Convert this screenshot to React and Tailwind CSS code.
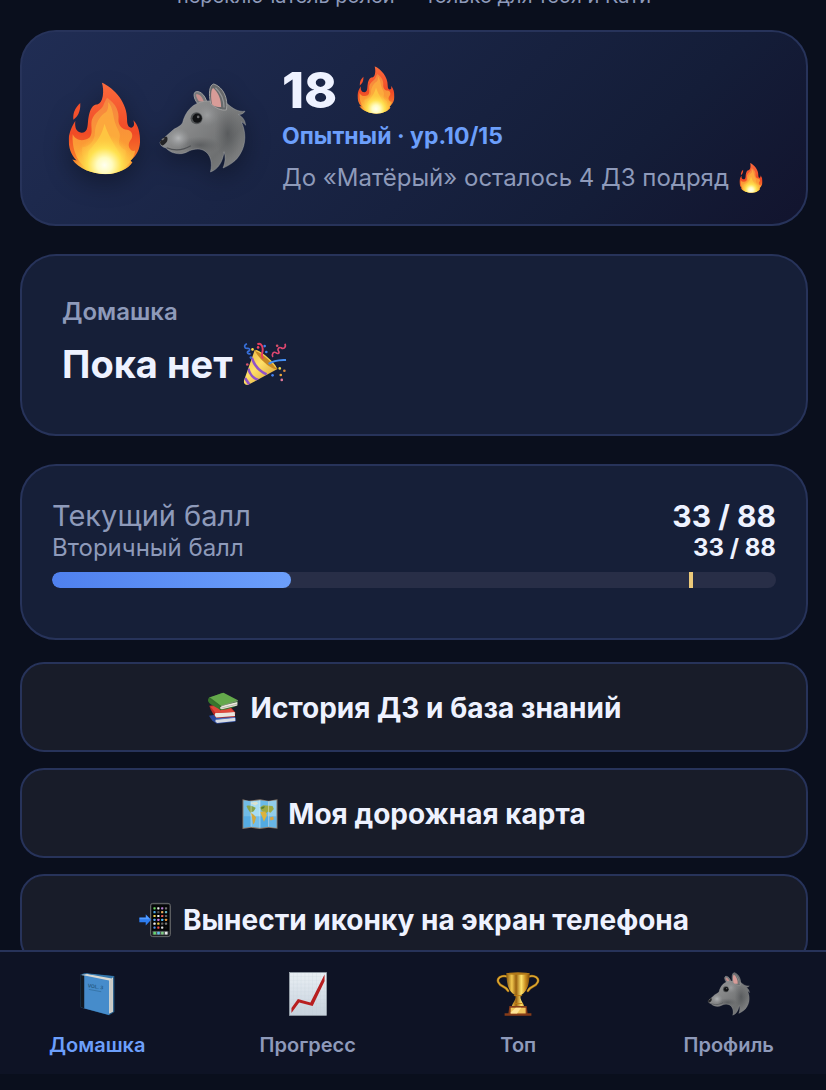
import React, { useId, useState } from 'react';

const Flame = ({ className }) => {
  const id = useId();
  return (
    <svg viewBox="84 65 220 279" className={className} aria-hidden="true">
      <defs>
        <linearGradient id={`${id}-outer`} x1="0" y1="0" x2="0" y2="1">
          <stop offset="0" stopColor="#fb6b3c" />
          <stop offset="0.55" stopColor="#f04a26" />
          <stop offset="0.85" stopColor="#f9822b" />
          <stop offset="1" stopColor="#fdb53a" />
        </linearGradient>
        <linearGradient id={`${id}-mid`} x1="0" y1="0" x2="0" y2="1">
          <stop offset="0" stopColor="#f58440" />
          <stop offset="0.6" stopColor="#fb9a35" />
          <stop offset="1" stopColor="#fdc63f" />
        </linearGradient>
        <radialGradient id={`${id}-glow`} gradientUnits="userSpaceOnUse" cx="194" cy="315" r="92">
          <stop offset="0" stopColor="#fffff0" />
          <stop offset="0.25" stopColor="#fffcc0" />
          <stop offset="0.55" stopColor="#ffe352" stopOpacity="0.95" />
          <stop offset="1" stopColor="#fec33e" stopOpacity="0" />
        </radialGradient>
        <clipPath id={`${id}-clip`}>
          <path d="M186 66C225 84 263 128 262 178C262 192 266 202 275 202C285 200 284 190 281 180C296 195 302 220 301 245C300 267 292 283 278 296L272 302L278 306C268 325 232 342 196 342C158 342 115 325 97 298L110 301C92 284 86 262 86 235C88 215 97 195 106 182C104 200 108 216 125 217C147 218 142 190 146 170C150 145 160 130 172 132C190 128 194 92 186 66Z" />
        </clipPath>
      </defs>
      <path d="M121 128C108 140 98 155 100 178C115 168 122 152 121 128Z" fill="#f4512c" />
      <g clipPath={`url(#${id}-clip)`}>
        <path d="M84 64H304V344H84Z" fill={`url(#${id}-outer)`} />
        <path
          d="M202 112C229 131 239 154 236 178C235 193 246 207 262 208C279 211 282 229 272 240C259 257 274 277 286 271C285 303 246 342 196 342C137 342 94 296 98 222C105 236 120 244 137 238C166 230 150 199 156 178C165 154 184 150 190 136C194 126 198 118 202 112Z"
          fill={`url(#${id}-mid)`}
        />
        <path
          d="M205 125C221 143 219 168 226 187C232 207 245 218 239 237C234 253 244 265 258 269C263 303 230 341 194 341C153 341 122 302 127 261C148 260 164 242 165 218C166 190 180 166 199 155C205 148 206 137 205 125Z"
          fill="#fdb53f"
          opacity="0.65"
        />
        <path
          d="M194 190C187 222 171 245 147 271C136 303 163 341 194 341C230 341 251 302 240 280C221 249 204 223 194 190Z"
          fill="#ffd744"
          opacity="0.6"
        />
        <circle cx="194" cy="315" r="92" fill={`url(#${id}-glow)`} />
      </g>
    </svg>
  );
};

const Wolf = ({ className }) => {
  const id = useId();
  return (
    <svg viewBox="355 62 265 273" className={className} aria-hidden="true">
      <defs>
        <linearGradient id={`${id}-fur`} x1="0" y1="0" x2="1" y2="1">
          <stop offset="0" stopColor="#a4a4a4" />
          <stop offset="0.45" stopColor="#848586" />
          <stop offset="0.72" stopColor="#6e7071" />
          <stop offset="1" stopColor="#8a8b8c" />
        </linearGradient>
        <radialGradient id={`${id}-cheek`}>
          <stop offset="0" stopColor="#b2b4b6" />
          <stop offset="1" stopColor="#999b9d" stopOpacity="0" />
        </radialGradient>
        <radialGradient id={`${id}-shade`}>
          <stop offset="0" stopColor="#44474a" stopOpacity="0.55" />
          <stop offset="1" stopColor="#55575a" stopOpacity="0" />
        </radialGradient>
        <clipPath id={`${id}-clip`}>
          <path d="M358 241C368 229 384 217 399 203C410 196 420 194 426 183C434 150 456 122 493 118C516 114 535 121 560 125C576 139 593 151 614 148C609 156 602 158 594 158C609 166 614 177 616 190C610 184 606 181 603 180C617 210 618 246 600 276C588 298 568 310 548 319C555 302 556 285 551 270C547 300 533 323 510 331C517 303 511 278 490 266C475 259 457 261 441 270C419 282 390 275 376 259C364 256 358 250 358 241Z" />
        </clipPath>
      </defs>
      <path d="M472 125C459 111 457 91 467 89C482 87 495 103 499 121Z" fill="#77797b" stroke="#a0a0a0" strokeWidth="3" />
      <path d="M475 118C468 108 464 97 469 96C480 98 487 109 490 120Z" fill="#c68f8d" />
      <g clipPath={`url(#${id}-clip)`}>
        <path d="M355 62H620V335H355Z" fill={`url(#${id}-fur)`} />
        <ellipse cx="562" cy="215" rx="40" ry="80" fill={`url(#${id}-shade)`} />
        <ellipse cx="478" cy="250" rx="62" ry="26" fill={`url(#${id}-shade)`} />
        <ellipse cx="413" cy="229" rx="34" ry="30" fill={`url(#${id}-cheek)`} />
        <ellipse cx="500" cy="160" rx="35" ry="34" fill={`url(#${id}-cheek)`} opacity="0.5" />
      </g>
      <path
        d="M358 241C368 229 384 217 399 203C410 196 420 194 426 183C434 150 456 122 493 118C516 114 535 121 560 125C576 139 593 151 614 148C609 156 602 158 594 158C609 166 614 177 616 190C610 184 606 181 603 180C617 210 618 246 600 276C588 298 568 310 548 319C555 302 556 285 551 270C547 300 533 323 510 331C517 303 511 278 490 266C475 259 457 261 441 270C419 282 390 275 376 259C364 256 358 250 358 241Z"
        fill="none"
        stroke="#b1b2b3"
        strokeWidth="2"
        opacity="0.6"
      />
      <path d="M378 258C399 267 425 267 451 252" stroke="#505256" strokeWidth="4" fill="none" />
      <path d="M358 241C362 231 371 223 379 225C384 235 377 246 366 251C361 250 358 247 358 241Z" fill="#242426" />
      <ellipse cx="367" cy="232" rx="5" ry="2" fill="#777879" transform="rotate(-35 367 232)" />
      <path d="M511 125C503 95 507 68 520 66C548 75 564 108 558 144C545 147 524 139 511 125Z" fill="#67696b" stroke="#a0a0a0" strokeWidth="3" />
      <path d="M515 128C510 106 511 81 518 78C534 91 542 113 542 135C532 137 520 134 515 128Z" fill="#d89c98" />
      <path d="M525 77C544 94 551 113 551 137" stroke="#939597" strokeWidth="4" fill="none" />
      <circle cx="468" cy="169" r="18" fill="#505355" />
      <circle cx="470" cy="169" r="14" fill="#111214" />
      <circle cx="473" cy="165" r="4" fill="#68696b" />
    </svg>
  );
};

const PartyPopper = ({ className }) => {
  const id = useId();
  return (
    <svg viewBox="670 155 134 133" className={className} aria-hidden="true">
      <defs>
        <linearGradient id={`${id}-cone`} x1="0" y1="0" x2="1" y2="1">
          <stop offset="0" stopColor="#e2a534" />
          <stop offset="0.45" stopColor="#ffe068" />
          <stop offset="1" stopColor="#c98722" />
        </linearGradient>
        <clipPath id={`${id}-clip`}>
          <path d="M706 178C722 182 766 220 775 237L686 285C676 286 671 280 673 272Z" />
        </clipPath>
      </defs>
      <g clipPath={`url(#${id}-clip)`}>
        <path d="M665 170H785V290H665Z" fill={`url(#${id}-cone)`} />
        <path d="M697 203C704 225 721 244 742 253M686 235C690 252 703 266 717 270M676 264L690 285" stroke="#9152c7" strokeWidth="8" fill="none" />
      </g>
      <path d="M706 178C722 182 766 220 775 237C755 241 711 198 706 178Z" fill="#c58725" />
      <path d="M710 181C729 188 760 214 770 232" stroke="#f4ce4c" strokeWidth="4" fill="none" />
      <path d="M714 162C721 156 730 164 730 176C731 188 723 195 731 205" stroke="#e73e62" strokeWidth="6" fill="none" />
      <path d="M748 221C765 209 780 210 801 209" stroke="#438df1" strokeWidth="6" fill="none" />
      <path d="M682 160C671 165 674 175 684 174C692 173 692 181 686 183C680 186 685 192 693 190" stroke="#376fd9" strokeWidth="5" fill="none" />
      <path d="M798 160C802 172 793 177 786 172C778 169 774 178 778 182C783 188 776 192 770 187C763 182 756 192 761 200" stroke="#df4770" strokeWidth="5" fill="none" />
      {[
        [699, 177, '#ffdb44'],
        [716, 171, '#ef4460'],
        [736, 167, '#3f82ee'],
        [741, 185, '#3f82ee'],
        [774, 166, '#d9536b'],
        [683, 223, '#d9536b'],
        [694, 202, '#3c62ce'],
        [782, 235, '#f0d94b'],
        [796, 242, '#d88b3e'],
        [760, 256, '#437eea'],
        [785, 255, '#eda83c'],
        [788, 270, '#e47a9c'],
      ].map(([cx, cy, fill]) => (
        <circle key={`${cx}-${cy}`} cx={cx} cy={cy} r="4" fill={fill} />
      ))}
    </svg>
  );
};

const Books = ({ className }) => (
  <svg viewBox="47 61 95 97" className={className} aria-hidden="true">
    <path d="M52 133L108 124L134 140L132 151L76 157C63 151 58 143 52 133Z" fill="#29479a" />
    <path d="M73 144L131 138L132 149L77 155C71 152 70 148 73 144Z" fill="#d6dbe2" />
    <path d="M73 144L131 138" stroke="#5372c4" strokeWidth="3" />
    <path d="M53 103L107 94L132 123L130 137L75 140C64 130 58 117 53 103Z" fill="#bb2926" />
    <path d="M72 125L130 122L131 134L74 138C69 134 68 129 72 125Z" fill="#e9e5df" />
    <path d="M56 105L108 100L129 122L72 125Z" fill="#df473b" />
    <path d="M50 81C47 89 51 94 57 98L86 115C92 118 139 105 137 101L139 88L92 63Z" fill="#38752d" />
    <path d="M86 104L138 91V102L91 113C84 113 82 109 86 104Z" fill="#eee9df" />
    <path d="M52 78L96 63L140 86L87 104Z" fill="#64a94b" />
    <path d="M88 104L140 87M89 110L137 98" stroke="#999c91" strokeWidth="2" />
    <path d="M52 78L87 104C81 109 84 113 89 115" stroke="#356f2c" strokeWidth="4" fill="none" />
  </svg>
);

const WorldMap = ({ className }) => (
  <svg viewBox="160 382 108 97" className={className} aria-hidden="true">
    <path d="M161 386L180 390L214 386L240 390L267 386V475L240 472L213 476L187 472L161 476Z" fill="#8b7a6a" />
    <path d="M164 389L187 392V469L164 472Z" fill="#71bce6" />
    <path d="M187 392L214 389V472L187 469Z" fill="#a6dcf4" />
    <path d="M214 389L240 392V469L214 472Z" fill="#6bbae7" />
    <path d="M240 392L264 389V472L240 469Z" fill="#91cdea" />
    <path d="M164 437H264V472L240 469L214 472L187 469L164 472Z" fill="#3698dd" opacity="0.45" />
    <path d="M173 406C181 403 193 406 201 412L195 422L185 427L177 415Z" fill="#86a24a" />
    <path d="M185 425L195 433L202 440L198 456L193 462L190 442Z" fill="#d2a83e" />
    <path d="M185 397L204 393L209 399L199 405Z" fill="#dbe2cf" />
    <path d="M213 411L224 404L252 406L256 415L246 427L238 423L231 430L219 421Z" fill="#9eaa43" />
    <path d="M214 424L230 423L235 434L226 454L220 437Z" fill="#dcb33e" />
    <path d="M218 409L229 407L226 413L218 416Z" fill="#557d35" />
    <path d="M244 441L254 438L256 447L246 450Z" fill="#dda33c" />
    <path d="M187 392V469M214 389V472M240 392V469" stroke="#eff8fb" strokeWidth="2" opacity="0.65" />
  </svg>
);

const appDots = [
  ['#69d85e', '#eeeeee', '#b980d8', '#767676'],
  ['#4aa6e8', '#555555', '#e6aa5b', '#67b8c5'],
  ['#f1d754', '#eeeeee', '#ef6259', '#666666'],
  ['#56a8ee', '#cc77dc', '#54bdf4', '#eb973d'],
  ['#eeeeee', '#e9c63d', '#666666', '#777777'],
  ['#4b8ce8', '#ef4e4a', '#dedede', '#111111'],
];

const PhoneArrow = ({ className }) => (
  <svg viewBox="52 65 100 108" className={className} aria-hidden="true">
    <rect x="88" y="67" width="62" height="104" rx="7" fill="#24282b" stroke="#686b6d" strokeWidth="3" />
    <rect x="92" y="71" width="54" height="96" rx="3" fill="#050607" />
    {appDots.map((row, y) =>
      row.map((fill, x) => (
        <rect key={`${x}-${y}`} x={97 + x * 12} y={79 + y * 12} width="7" height="7" rx="2" fill={fill} />
      ))
    )}
    <rect x="94" y="153" width="50" height="13" fill="#4f5558" />
    {['#64d86b', '#5ebdea', '#7bcc7e', '#e9e9e9'].map((fill, x) => (
      <rect key={fill} x={97 + x * 12} y="156" width="8" height="8" rx="2" fill={fill} />
    ))}
    <path d="M53 111H73V101L90 118L73 136V126H53Z" fill="#2d7df0" />
    <path d="M54 112H74V104L87 117H54Z" fill="#529bff" />
  </svg>
);

const BlueBook = ({ className }) => (
  <svg viewBox="234 99 110 132" className={className} aria-hidden="true">
    <path d="M238 106L251 101L342 110V220L326 230L241 207L237 204Z" fill="#245985" />
    <path d="M243 106L258 103L338 113V219L326 225L247 204Z" fill="#d8d8d2" />
    <path d="M244 107L326 124V229L244 207Z" fill="#468ccb" />
    <path d="M238 107L250 109V209L238 205Z" fill="#111820" />
    <path d="M241 106L257 102L341 111L334 118L259 104Z" fill="#3478ae" />
    <path d="M331 122V221M335 119V219" stroke="#999d9c" strokeWidth="1" />
    <text x="260" y="145" fontFamily="Inter, sans-serif" fontSize="15" fontWeight="600" fill="#24577f" transform="rotate(8 262 144)">
      VOL. 3
    </text>
    <path d="M264 151L302 158" stroke="#2e6996" strokeWidth="2" />
  </svg>
);

const Chart = ({ className }) => {
  const id = useId();
  return (
    <svg viewBox="862 95 119 137" className={className} aria-hidden="true">
      <defs>
        <linearGradient id={id} x1="0" y1="0" x2="0" y2="1">
          <stop offset="0" stopColor="#e9eff4" />
          <stop offset="1" stopColor="#c7d2dd" />
        </linearGradient>
      </defs>
      <rect x="864" y="97" width="115" height="133" fill={`url(#${id})`} stroke="#aab4bc" strokeWidth="2" />
      {[876, 888, 900, 912, 924, 936, 948, 960, 972].map((x) => (
        <path key={x} d={`M${x} 98V229`} stroke="#bdc9d2" strokeWidth="1" opacity="0.6" />
      ))}
      {[109, 121, 133, 145, 157, 169, 181, 193, 205, 217].map((y) => (
        <path key={y} d={`M865 ${y}H978`} stroke="#c3cdd5" strokeWidth="1" opacity="0.5" />
      ))}
      <path d="M870 207L890 179L929 190L973 103V124L936 201L894 190L870 223Z" fill="#b81f20" />
    </svg>
  );
};

const Trophy = ({ className }) => {
  const id = useId();
  return (
    <svg viewBox="107 94 134 138" className={className} aria-hidden="true">
      <defs>
        <linearGradient id={id}>
          <stop offset="0" stopColor="#82530c" />
          <stop offset="0.24" stopColor="#f3c94f" />
          <stop offset="0.42" stopColor="#99600f" />
          <stop offset="0.64" stopColor="#ffe46c" />
          <stop offset="0.82" stopColor="#c98d20" />
          <stop offset="1" stopColor="#7c4908" />
        </linearGradient>
      </defs>
      <path d="M141 108C120 102 106 115 113 127C120 143 132 134 143 153M207 108C228 102 242 115 235 127C228 143 216 134 205 153" fill="none" stroke="#8c5b12" strokeWidth="8" strokeLinecap="round" />
      <path d="M141 108C120 102 106 115 113 127C120 143 132 134 143 153M207 108C228 102 242 115 235 127C228 143 216 134 205 153" fill="none" stroke="#dca930" strokeWidth="5" strokeLinecap="round" />
      <path d="M137 98H211C209 126 207 153 184 166C178 172 184 184 190 193L193 201H155L158 193C164 184 170 172 164 166C141 153 139 126 137 98Z" fill={`url(#${id})`} />
      <ellipse cx="174" cy="99" rx="37" ry="4" fill="#b27918" />
      <path d="M161 168H187M160 193H188" stroke="#bd7b15" strokeWidth="3" />
      <path d="M147 201H201L204 223H216V231H132V223H144Z" fill="#873c18" />
      <rect x="151" y="206" width="47" height="18" fill="#f1c65d" />
      <path d="M151 221L167 206H184L171 224H151Z" fill="#ffe497" />
    </svg>
  );
};

const score = { current: 33, target: 88 };

const actions = [
  { label: 'История ДЗ и база знаний', icon: <Books className="h-8 w-8 shrink-0" />, gap: 'gap-3' },
  { label: 'Моя дорожная карта', icon: <WorldMap className="h-8 w-9 shrink-0" />, gap: 'gap-2.5' },
  { label: 'Вынести иконку на экран телефона', icon: <PhoneArrow className="h-9 w-8 shrink-0" />, gap: 'gap-3' },
];

const tabs = [
  { id: 'home', label: 'Домашка', icon: <BlueBook className="h-11 w-9" /> },
  { id: 'progress', label: 'Прогресс', icon: <Chart className="h-11 w-10" /> },
  { id: 'top', label: 'Топ', icon: <Trophy className="h-11 w-11" /> },
  { id: 'profile', label: 'Профиль', icon: <Wolf className="h-11 w-11" /> },
];

const ScoreCard = () => (
  <section className="mt-7 rounded-[36px] border-2 border-[#27335a] bg-[#161f38] px-[30px] pt-8 pb-[50px]">
    <div className="flex items-center justify-between text-[29px] leading-9">
      <span className="text-[#8e9aba]">Текущий балл</span>
      <span className="text-[30px] font-bold">
        {score.current} / {score.target}
      </span>
    </div>
    <div className="flex items-center justify-between text-2xl leading-7">
      <span className="text-[#8e9aba]">Вторичный балл</span>
      <span className="font-bold">
        {score.current} / {score.target}
      </span>
    </div>
    <div
      role="progressbar"
      aria-label="Текущий балл"
      aria-valuenow={score.current}
      aria-valuemin={0}
      aria-valuemax={100}
      className="relative mt-2.5 h-4 overflow-hidden rounded-full bg-[#282e47]"
    >
      <div
        className="h-full rounded-full bg-linear-to-r from-[#4f80ee] to-[#6c9ffb]"
        style={{ width: `${score.current}%` }}
      />
      {/* Target mark */}
      <div className="absolute top-0 h-full w-1 bg-[#ecc979]" style={{ left: `${score.target}%` }} />
    </div>
  </section>
);

const App = () => {
  const [activeTab, setActiveTab] = useState('home');

  return (
    <div className="flex h-dvh flex-col bg-[#0a0f1d] pb-4 font-[Inter,'Noto_Sans',sans-serif] text-[#eef2ff]">
      <main className="min-h-0 flex-1 overflow-y-auto pr-[18px] pl-5 [scrollbar-width:none]">
        <p className="-mt-4 text-center text-xl leading-6 text-[#8e9aba]">
          переключатель ролей — только для тебя и Кати
        </p>

        {/* Streak */}
        <section className="mt-[22px] flex items-center rounded-[36px] border-2 border-[#27335a] bg-linear-135 from-[#202d54] via-[#141d38] via-75% to-[#12142e] py-[30px] pr-8 pl-[46px]">
          <div className="flex shrink-0 items-center gap-[18px] drop-shadow-[0_8px_12px_rgba(0,0,0,0.35)]">
            <Flame className="h-[93px] w-[73px]" />
            <Wolf className="h-[92px] w-[88px]" />
          </div>
          <div className="ml-[35px] pt-1">
            <div className="flex items-center gap-5 text-[50px] leading-[48px] font-extrabold">
              18
              <Flame className="h-12 w-[38px]" />
            </div>
            <p className="mt-2 text-[23px] leading-7 font-bold text-[#6c9ffb]">Опытный · ур.10/15</p>
            <p className="mt-3 flex items-center gap-2.5 text-2xl leading-8 whitespace-nowrap text-[#8e9aba]">
              До «Матёрый» осталось 4 ДЗ подряд
              <Flame className="h-[30px] w-6 shrink-0" />
            </p>
          </div>
        </section>

        {/* Homework */}
        <section className="mt-7 rounded-[36px] border-2 border-[#27335a] bg-[#161f38] px-10 pt-[42px] pb-[46px]">
          <p className="text-2xl leading-7 font-semibold text-[#8e9aba]">Домашка</p>
          <h1 className="mt-3.5 flex items-center gap-2.5 text-[38px] leading-[48px] font-bold">
            Пока нет
            <PartyPopper className="h-11 w-11" />
          </h1>
        </section>

        <ScoreCard />

        <div className="mt-[22px] space-y-4">
          {actions.map((action) => (
            <button
              key={action.label}
              type="button"
              className={`flex h-[90px] w-full items-center justify-center rounded-3xl border-2 border-[#27335a] bg-[#181c29] pt-0.5 text-[28px] leading-9 font-bold ${action.gap}`}
            >
              {action.icon}
              {action.label}
            </button>
          ))}
        </div>
      </main>

      <nav className="grid grid-cols-4 gap-4 border-t-2 border-[#27335a] bg-[#0e1325] pt-5 pb-[17px]">
        {tabs.map((tab) => (
          <button
            key={tab.id}
            type="button"
            onClick={() => setActiveTab(tab.id)}
            className={`flex flex-col items-center gap-[17px] text-xl leading-6 font-semibold ${
              activeTab === tab.id ? 'text-[#6c9ffb]' : 'text-[#8e9aba]'
            }`}
          >
            {tab.icon}
            {tab.label}
          </button>
        ))}
      </nav>
    </div>
  );
};

export default App;
